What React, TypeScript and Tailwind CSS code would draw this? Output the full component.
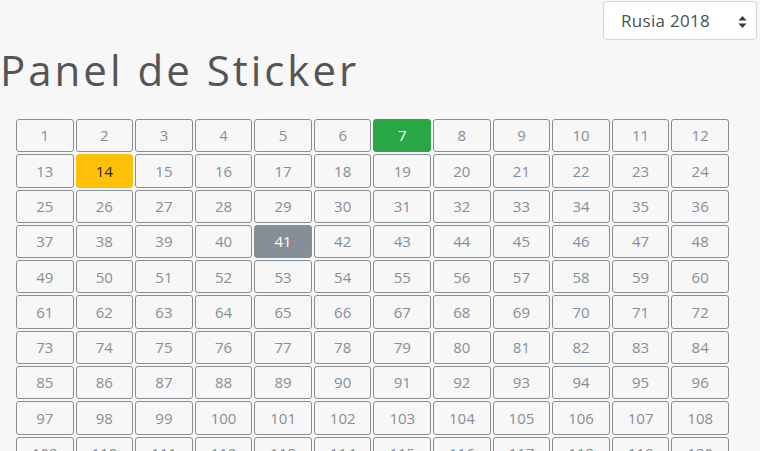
import React from "react";

const nums = Array.from({ length: 120 }, (_, i) => i + 1);

function cellClass(n: number) {
  if (n === 7) return "bg-[#28a745] border-[#28a745] text-white";
  if (n === 14) return "bg-[#ffc107] border-[#ffc107] text-[#212529]";
  if (n === 41) return "bg-[#868e96] border-[#868e96] text-white";
  return "bg-transparent border-[#868e96] text-[#868e96]";
}

export default function App() {
  return (
    <div className="w-[760px] h-[451px] overflow-hidden bg-[#f7f7f7] font-['Open_Sans',sans-serif]">
      <div className="flex justify-end pt-px pr-[3px]">
        <div className="relative w-[154px] h-[39px] bg-white border border-[#ced4da] rounded-[4px] flex items-center pl-[17px] text-[17px] tracking-[0.3px] text-[#495057]">
          Rusia 2018
          <svg className="absolute right-[9px] top-[14px]" width="9" height="12" viewBox="0 0 9 12">
            <path d="M4.5 0 L8.5 4.5 L0.5 4.5 Z" fill="#343a40" />
            <path d="M4.5 12 L8.5 7.5 L0.5 7.5 Z" fill="#343a40" />
          </svg>
        </div>
      </div>
      <h1 className="mt-[5px] ml-0 text-[42px] leading-[50px] text-[#555555] font-['Open_Sans',sans-serif] font-normal tracking-[3px]">
        Panel de Sticker
      </h1>
      <div className="ml-[15px] mt-[23px] w-[715px] grid grid-cols-12">
        {nums.map((n) => (
          <div key={n} className="p-px">
            <div
              className={`h-[33.3px] flex items-center justify-center border rounded-[3px] text-[15px] ${cellClass(n)}`}
            >
              {n}
            </div>
          </div>
        ))}
      </div>
    </div>
  );
}
